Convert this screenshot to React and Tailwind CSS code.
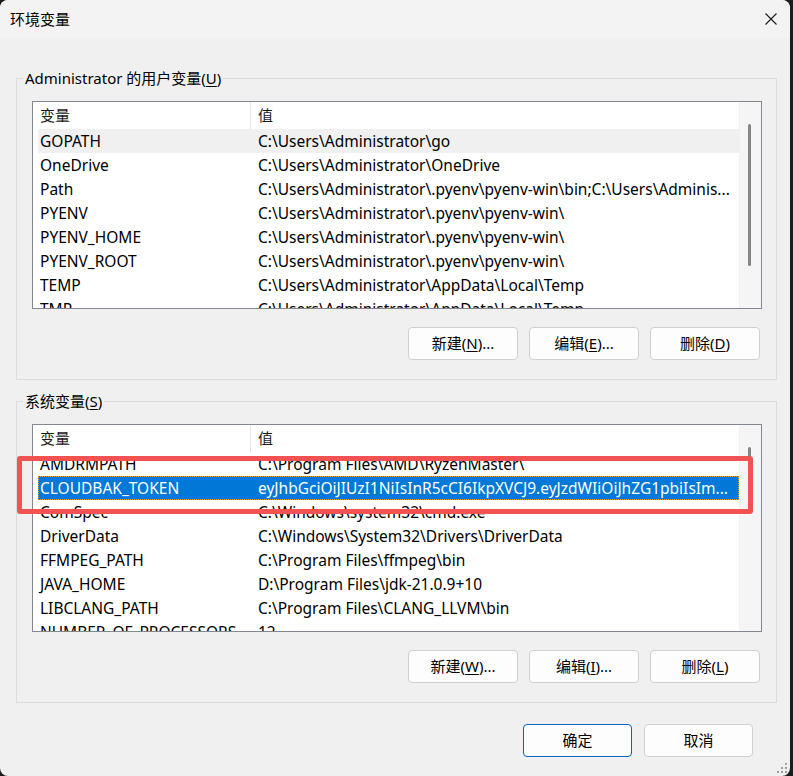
import clsx from 'clsx'

const userVars = [
  ['GOPATH', 'C:\\Users\\Administrator\\go'],
  ['OneDrive', 'C:\\Users\\Administrator\\OneDrive'],
  ['Path', 'C:\\Users\\Administrator\\.pyenv\\pyenv-win\\bin;C:\\Users\\Adminis...'],
  ['PYENV', 'C:\\Users\\Administrator\\.pyenv\\pyenv-win\\'],
  ['PYENV_HOME', 'C:\\Users\\Administrator\\.pyenv\\pyenv-win\\'],
  ['PYENV_ROOT', 'C:\\Users\\Administrator\\.pyenv\\pyenv-win\\'],
  ['TEMP', 'C:\\Users\\Administrator\\AppData\\Local\\Temp'],
  ['TMP', 'C:\\Users\\Administrator\\AppData\\Local\\Temp'],
]

const sysVars = [
  ['AMDRMPATH', 'C:\\Program Files\\AMD\\RyzenMaster\\'],
  ['CLOUDBAK_TOKEN', 'eyJhbGciOiJIUzI1NiIsInR5cCI6IkpXVCJ9.eyJzdWIiOiJhZG1pbiIsIm...'],
  ['ComSpec', 'C:\\Windows\\system32\\cmd.exe'],
  ['DriverData', 'C:\\Windows\\System32\\Drivers\\DriverData'],
  ['FFMPEG_PATH', 'C:\\Program Files\\ffmpeg\\bin'],
  ['JAVA_HOME', 'D:\\Program Files\\jdk-21.0.9+10'],
  ['LIBCLANG_PATH', 'C:\\Program Files\\CLANG_LLVM\\bin'],
  ['NUMBER_OF_PROCESSORS', '12'],
]

// list view with a fixed header, rows and a thin overlay scrollbar
function VarList({ rows, hovered, selected, thumbHeight }) {
  return (
    <div className="flex h-[208px] border border-[#828790] bg-white">
      <div className="min-w-0 flex-1 overflow-hidden">
        <div className="flex h-[27px] items-center text-[#1a1a1a]">
          <div className="flex h-full w-[218px] items-center border-r border-[#e5e5e5] pl-[7px]">变量</div>
          <div className="pl-[7px]">值</div>
        </div>
        <div className="pl-[5px] text-[15.5px]">
          {rows.map(([name, value], i) => (
            <div
              key={name}
              className={clsx(
                'flex h-[24px] items-center pt-[1px]',
                i === hovered && 'bg-[#f0f0f0]',
                i === selected && 'bg-[#0078d7] text-white outline-1 outline-dotted outline-[#e8a33c] -outline-offset-1'
              )}
            >
              <div className="w-[218px] shrink-0 truncate pl-[2px]">{name}</div>
              <div className="min-w-0 flex-1 truncate pl-[2px]">{value}</div>
            </div>
          ))}
        </div>
      </div>
      <div className="flex w-[22px] flex-col border-l border-[#f0f0f0] bg-[#f5f5f5]">
        <div className="ml-[8px] mt-[22px] w-[3px] rounded-full bg-[#858585]" style={{ height: thumbHeight }} />
      </div>
    </div>
  )
}

function Btn({ children, primary, className }) {
  return (
    <button
      className={clsx(
        'flex items-center justify-center rounded-[4px] border bg-[#fdfdfd] text-[15px] text-black',
        primary ? 'border-[#0067c0]' : 'border-[#d0d0d0]',
        className
      )}
    >
      {children}
    </button>
  )
}

function Key({ k }) {
  return <span>(<u className="underline-offset-2">{k}</u>)</span>
}

function Group({ label, hotkey, children }) {
  return (
    <fieldset className="border border-[#dcdcdc] pb-[19px] pl-[15px] pr-[14px] pt-[13px]">
      <legend className="-ml-[9px] px-[2px] leading-[20px]">
        {label}
        <Key k={hotkey} />
      </legend>
      {children}
    </fieldset>
  )
}

function ButtonRow({ keys }) {
  return (
    <div className="mt-[18px] flex justify-end gap-[11px] pr-[2px]">
      <Btn className="h-[33px] w-[110px]">新建<Key k={keys[0]} />...</Btn>
      <Btn className="h-[33px] w-[110px]">编辑<Key k={keys[1]} />...</Btn>
      <Btn className="h-[33px] w-[110px]">删除<Key k={keys[2]} /></Btn>
    </div>
  )
}

export default function App() {
  return (
    <div className="flex h-[776px] w-[793px] bg-[#1c1c1c] font-['Noto_Sans','Noto_Sans_CJK_SC',sans-serif] text-[15px] text-black">
      <div className="relative flex h-full w-[790px] flex-col overflow-hidden rounded-[8px] bg-[#f0f0f0]">
        <div className="flex h-[38px] shrink-0 items-center bg-[#f3f3f3] pl-[10px] pr-[13px]">
          <span>环境变量</span>
          <svg className="ml-auto" width="12" height="12" viewBox="0 0 12 12">
            <path d="M0.5 0.5 L11.5 11.5 M11.5 0.5 L0.5 11.5" stroke="#1a1a1a" strokeWidth="1.1" />
          </svg>
        </div>

        <div className="flex flex-col pl-[16px] pr-[13px] pt-[30px]">
          <Group label="Administrator 的用户变量" hotkey="U">
            <VarList rows={userVars} hovered={0} thumbHeight={142} />
            <ButtonRow keys={['N', 'E', 'D']} />
          </Group>

          <div className="mt-[11px]">
            <Group label="系统变量" hotkey="S">
              <VarList rows={sysVars} selected={1} thumbHeight={54} />
              <ButtonRow keys={['W', 'I', 'L']} />
            </Group>
          </div>

          <div className="mt-[21px] flex justify-end gap-[12px] pr-[24px]">
            <Btn primary className="h-[33px] w-[109px]">确定</Btn>
            <Btn className="h-[33px] w-[109px]">取消</Btn>
          </div>
        </div>

        {/* red highlight around the token row */}
        <div className="absolute left-[17px] top-[456px] h-[58px] w-[736px] rounded-[3px] border-[5px] border-[#f35252]" />

        {/* size grip */}
        <div className="absolute bottom-[3px] right-[3px] grid grid-cols-3 gap-[2px]">
          <span className="h-[2px] w-[2px]" />
          <span className="h-[2px] w-[2px]" />
          <span className="h-[2px] w-[2px] bg-[#a0a0a0]" />
          <span className="h-[2px] w-[2px]" />
          <span className="h-[2px] w-[2px] bg-[#a0a0a0]" />
          <span className="h-[2px] w-[2px] bg-[#a0a0a0]" />
          <span className="h-[2px] w-[2px] bg-[#a0a0a0]" />
          <span className="h-[2px] w-[2px] bg-[#a0a0a0]" />
          <span className="h-[2px] w-[2px] bg-[#a0a0a0]" />
        </div>
      </div>
    </div>
  )
}
